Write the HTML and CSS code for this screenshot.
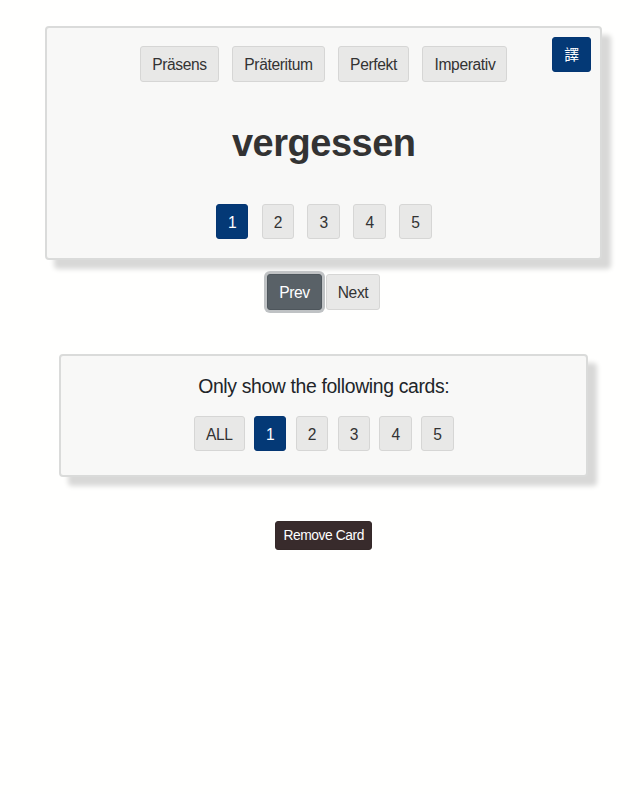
FILE: index.html
```html
<!DOCTYPE html>
<html lang="de">
<head>
<meta charset="utf-8">
<title>Verb cards</title>
<link rel="stylesheet" href="styles.css">
</head>
<body>
<main class="page">
  <section class="card verb-card">
    <button class="btn active translate">譯</button>
    <div class="row tenses">
      <button class="btn">Präsens</button>
      <button class="btn">Präteritum</button>
      <button class="btn">Perfekt</button>
      <button class="btn">Imperativ</button>
    </div>
    <h1 class="verb">vergessen</h1>
    <div class="row levels">
      <button class="btn active">1</button>
      <button class="btn">2</button>
      <button class="btn">3</button>
      <button class="btn">4</button>
      <button class="btn">5</button>
    </div>
  </section>
  <nav class="row pager">
    <button class="btn pressed">Prev</button>
    <button class="btn">Next</button>
  </nav>
  <section class="card filter-card">
    <p class="label">Only show the following cards:</p>
    <div class="row filters">
      <button class="btn">ALL</button>
      <button class="btn active">1</button>
      <button class="btn">2</button>
      <button class="btn">3</button>
      <button class="btn">4</button>
      <button class="btn">5</button>
    </div>
  </section>
  <button class="btn remove">Remove Card</button>
</main>
</body>
</html>
```
FILE: styles.css
```css
* { box-sizing: border-box; }
body {
  margin: 0;
  background: #fffffe;
  color: #212529;
  font: 15.6px/22px "Liberation Sans", "Noto Sans CJK TC", sans-serif;
}
.page {
  display: flex;
  flex-direction: column;
  align-items: center;
  padding: 26px 6.5px 0 14px;
  min-height: 794px;
}
.card {
  position: relative;
  display: flex;
  flex-direction: column;
  align-items: center;
  background: #f8f8f7;
  border: 2px solid #dadbda;
  border-radius: 4px;
  box-shadow: 9px 9px 5px #d8d8d7;
}
.verb-card { width: 557px; height: 234px; padding-top: 18.3px; }
.filter-card { width: 529px; height: 123px; margin-top: 44px; padding-top: 16px; }
.row { display: flex; justify-content: center; }
.tenses, .levels { gap: 13.3px; }
.filters { gap: 9.3px; margin-top: 16.3px; }
.pager { gap: 3.7px; margin-top: 14.3px; }
.btn {
  height: 35.3px;
  padding: 2px 11.1px 0;
  border: 1px solid #d6d6d5;
  border-radius: 3px;
  background: #e8e8e7;
  color: #333;
  font: inherit;
  letter-spacing: -0.36px;
  white-space: nowrap;
}
.active { background: #043976; border-color: #043673; color: #fff; }
.translate {
  position: absolute;
  top: 9px;
  right: 9px;
  padding-top: 0;
  font-size: 14.9px;
  letter-spacing: 0;
}
.verb {
  margin: 37.4px 0 0;
  font-size: 38px;
  line-height: 48px;
  letter-spacing: -0.5px;
  color: #333;
}
.levels { margin-top: 37px; }
.pressed {
  background: #596167;
  border-color: #4e565c;
  color: #fff;
  box-shadow: 0 0 0 3px #bfc2c4;
}
.label {
  margin: 0;
  font-size: 19.4px;
  line-height: 28px;
  letter-spacing: -0.36px;
}
.remove {
  height: 29px;
  margin-top: 44px;
  padding: 2px 7.4px 0;
  background: #382b2c;
  border-color: #352929;
  color: #fff;
  font-size: 13.8px;
  letter-spacing: -0.42px;
}
```
